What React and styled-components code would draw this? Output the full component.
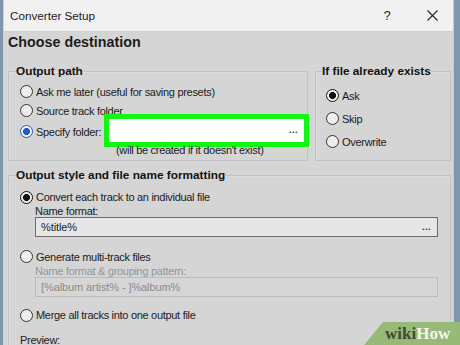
import React from 'react'
import styled, { createGlobalStyle, css } from 'styled-components'

const Global = createGlobalStyle`
  html, body {
    margin: 0;
    padding: 0;
    height: 345px;
    background: #7f96ae;
    overflow: hidden;
  }
  body {
    font-family: "Liberation Sans", Arial, sans-serif;
    color: #1b1b1b;
  }
`

const Window = styled.div`
  position: relative;
  margin-left: 3px;
  width: 451px;
  height: 345px;
  background: #d5d5d5;
  border-left: 1px solid #c9d3dd;
  border-right: 1px solid #c4ccd4;
  box-sizing: border-box;
`

const TitleBar = styled.div`
  height: 32px;
  display: flex;
  align-items: center;
  padding-left: 6px;
  background: #f1f1f1;
  border-bottom: 1px solid #d0d0d0;
  box-sizing: border-box;
  font-size: 11.7px;
`

const TitleText = styled.div`
  flex: 1;
`

const TitleButton = styled.div`
  width: ${p => p.$w}px;
  display: flex;
  justify-content: center;
  align-items: center;
  font-size: 13px;
  color: #222;
`

const Body = styled.div`
  padding: 0 2px 0 4px;
  height: 313px;
  overflow: hidden;
`

const Heading = styled.div`
  height: 21px;
  line-height: 21px;
  font-size: 14.3px;
  font-weight: bold;
`

const Row = styled.div`
  display: flex;
  gap: 7px;
  margin-top: 10px;
`

const Group = styled.fieldset`
  margin: ${p => p.$top || 0}px 0 0 0;
  padding: 0 0 ${p => p.$bottom || 0}px 0;
  border: 1px solid #c2c2c2;
  box-shadow: inset 1px 1px 0 #dcdcdc;
  width: ${p => p.$width}px;
  box-sizing: border-box;
  min-width: 0;
`

const Legend = styled.legend`
  margin-left: ${p => p.$left || 7}px;
  padding: 0;
  height: 16px;
  line-height: 16px;
  font-size: 11.8px;
  font-weight: bold;
  color: #111;
`

const Content = styled.div`
  padding: ${p => p.$top || 0}px 0 0 ${p => p.$left || 11}px;
  font-size: 11px;
  letter-spacing: -0.3px;
`

const Option = styled.div`
  display: flex;
  align-items: center;
  height: ${p => p.$h || 19}px;
  margin-top: ${p => p.$mt || 0}px;
  gap: 3px;
  white-space: nowrap;
`

const Radio = styled.span`
  width: 13px;
  height: 13px;
  border-radius: 50%;
  box-sizing: border-box;
  flex: none;
  border: 1px solid #333;
  background: #eeeeee;
  ${p =>
    p.$checked &&
    css`
      border: 1.5px solid ${p.$color};
      background: radial-gradient(circle, ${p.$color} 0 3.2px, #f4f4f4 3.8px);
    `}
`

const Field = styled.div`
  display: flex;
  align-items: center;
  justify-content: space-between;
  box-sizing: border-box;
  height: 20px;
  margin-right: 12px;
  margin-left: 15px;
  padding: 0 6px 0 5px;
  border: 1px solid ${p => (p.$disabled ? '#bcbcbc' : '#6d6d6d')};
  background: ${p => (p.$disabled ? '#d6d6d6' : '#e6e6e6')};
  color: ${p => (p.$disabled ? '#8c8c8c' : '#1b1b1b')};
  letter-spacing: -0.1px;
`

const Dots = styled.span`
  font-weight: bold;
  font-size: 9px;
  letter-spacing: 0.5px;
  color: #222;
`

const FolderInput = styled.div`
  margin-left: auto;
  margin-right: 3px;
  margin-top: -3px;
  width: 195px;
  height: 23px;
  background: #ffffff;
  outline: 5px solid #12f712;
  display: flex;
  align-items: center;
  justify-content: flex-end;
  padding-right: 6px;
  box-sizing: border-box;
`

const Note = styled.div`
  height: 14px;
  line-height: 14px;
  margin-left: 96px;
`

const Label = styled.div`
  height: 11px;
  line-height: 11px;
  margin-left: 15px;
  color: ${p => (p.$disabled ? '#969696' : '#1b1b1b')};
`

const Preview = styled.div`
  margin-top: 9px;
  height: 14px;
  line-height: 14px;
`

const Badge = styled.div`
  position: absolute;
  right: -7px;
  bottom: 0;
  width: 96px;
  height: 23px;
  background: #97ba78;
  clip-path: polygon(19px 0, 100% 0, 100% 100%, 0 100%);
  display: flex;
  align-items: center;
  padding-left: 21px;
  box-sizing: border-box;
  font-family: "Liberation Serif", "DejaVu Serif", serif;
  font-weight: bold;
  font-size: 17px;
`

const Wiki = styled.span`
  color: #3c4b34;
`

const How = styled.span`
  color: #f4f8ef;
`

const CloseIcon = () => (
  <svg width="11" height="11" viewBox="0 0 11 11">
    <path d="M0.5 0.5 L10.5 10.5 M10.5 0.5 L0.5 10.5" stroke="#222" strokeWidth="1.1" fill="none" />
  </svg>
)

const RadioOption = ({ checked, color = '#111', h, mt, children }) => (
  <Option $h={h} $mt={mt}>
    <Radio $checked={checked} $color={color} />
    {children}
  </Option>
)

export default function App() {
  return (
    <>
      <Global />
      <Window>
        <TitleBar>
          <TitleText>Converter Setup</TitleText>
          <TitleButton $w={50}>?</TitleButton>
          <TitleButton $w={41}>
            <CloseIcon />
          </TitleButton>
        </TitleBar>
        <Body>
          <Heading>Choose destination</Heading>
          <Row>
            <Group $width={300} $bottom={3}>
              <Legend>Output path</Legend>
              <Content $top={3}>
                <RadioOption>Ask me later (useful for saving presets)</RadioOption>
                <RadioOption>Source track folder</RadioOption>
                <RadioOption checked color="#1a5fc4" h={23}>
                  Specify folder:
                  <FolderInput>
                    <Dots>...</Dots>
                  </FolderInput>
                </RadioOption>
                <Note>(will be created if it doesn't exist)</Note>
              </Content>
            </Group>
            <Group $width={136}>
              <Legend $left={6}>If file already exists</Legend>
              <Content $top={5} $left={10}>
                <RadioOption checked h={23}>Ask</RadioOption>
                <RadioOption h={23}>Skip</RadioOption>
                <RadioOption h={23}>Overwrite</RadioOption>
              </Content>
            </Group>
          </Row>
          <Group $width={443} $top={6}>
            <Legend>Output style and file name formatting</Legend>
            <Content $top={5}>
              <RadioOption checked h={18}>Convert each track to an individual file</RadioOption>
              <Label>Name format:</Label>
              <Field>
                <span>%title%</span>
                <Dots>...</Dots>
              </Field>
              <RadioOption mt={10}>Generate multi-track files</RadioOption>
              <Label $disabled>Name format &amp; grouping pattern:</Label>
              <Field $disabled>
                <span>[%album artist% - ]%album%</span>
              </Field>
              <RadioOption h={18} mt={9}>Merge all tracks into one output file</RadioOption>
              <Preview>Preview:</Preview>
            </Content>
          </Group>
        </Body>
        <Badge>
          <Wiki>wiki</Wiki>
          <How>How</How>
        </Badge>
      </Window>
    </>
  )
}
